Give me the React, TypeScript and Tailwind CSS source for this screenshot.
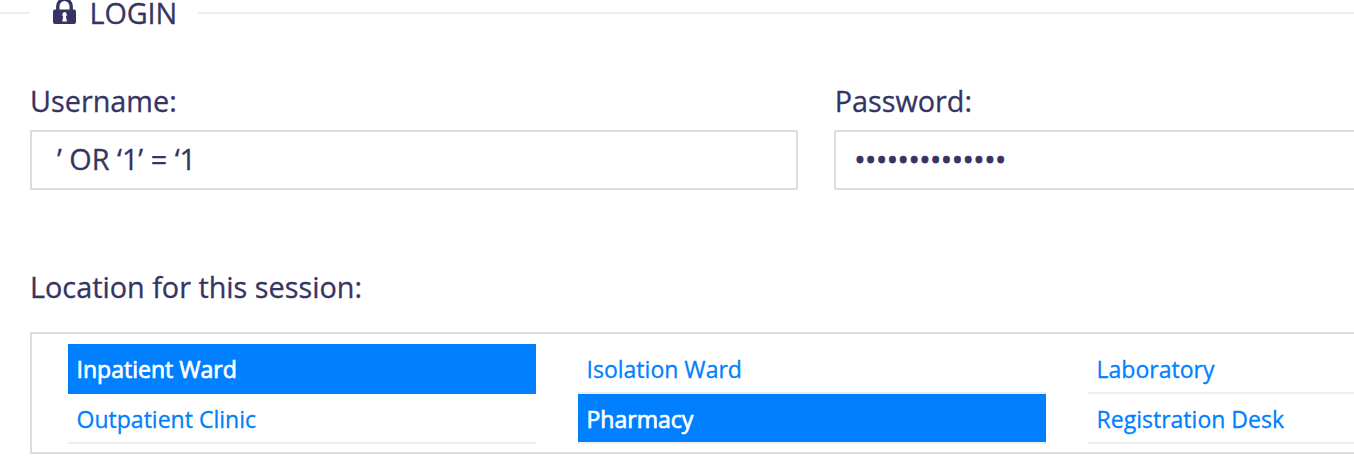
import React from 'react';

type Location = { name: string; style: string };

const selectedStrong = 'h-[50px] border-b-2 border-[#007fff] bg-[#007fff] text-white [-webkit-text-stroke:0.7px_white]';
const selected = 'h-[50px] border-b-2 border-[#eeeeee] bg-[#007fff] text-white [-webkit-text-stroke:0.7px_white]';
const plain = 'h-[50px] border-b-2 border-[#eeeeee] text-[#007fff] [-webkit-text-stroke:0.3px_#007fff]';

const columns: Location[][] = [
  [{ name: 'Inpatient Ward', style: selectedStrong }, { name: 'Outpatient Clinic', style: plain }],
  [{ name: 'Isolation Ward', style: plain }, { name: 'Pharmacy', style: selected }],
  [{ name: 'Laboratory', style: plain }, { name: 'Registration Desk', style: plain }],
];

function LockIcon() {
  return (
    <svg className="ml-[22px] h-[26px] w-[26px] shrink-0" viewBox="0 0 26 26">
      <path d="M5.800 11V6.300a6.700 7 0 0 1 13.400 0V11" fill="none" stroke="#363463" strokeWidth="3.400" />
      <path
        fillRule="evenodd"
        fill="#363463"
        d="M3 9.500H22Q24 9.500 24 11.500V22Q24 24 22 24H3Q1 24 1 22V11.500Q1 9.500 3 9.500ZM12.500 12A2.700 2.700 0 0 0 11.200 16.700L10.200 21.500H15L13.900 16.700A2.700 2.700 0 0 0 12.500 12Z"
      />
    </svg>
  );
}

export default function App() {
  return (
    <div className="h-[466px] w-full overflow-hidden bg-white font-['Open_Sans',sans-serif] text-[28.8px] text-[#363463] [-webkit-text-stroke:0.3px_#363463]">
      <div className="flex h-[26px] w-[1600px] items-center">
        <div className="h-[2px] w-[30px] bg-[#eeeeee]" />
        <LockIcon />
        <span className="ml-[11.500px] w-[86.500px] whitespace-nowrap leading-[26px] tracking-[-0.1px]">LOGIN</span>
        <div className="ml-[22px] h-[2px] flex-1 bg-[#eeeeee]" />
      </div>
      <div className="flex w-[1602px] gap-[36px] pl-[30px] pt-[55px]">
        <label className="w-[768px]">
          <span className="block h-[49px] leading-[40px]">Username:</span>
          <span className="flex h-[60px] items-center border-2 border-[#dddddd] pb-[2px] pl-[25px]">’ OR ‘1’ = ‘1</span>
        </label>
        <label className="w-[768px]">
          <span className="block h-[49px] pl-[0.7px] leading-[40px]">Password:</span>
          <span className="flex h-[60px] items-center border-2 border-[#dddddd] pb-[2px] pl-[18.500px] [-webkit-text-stroke:0.9px_#363463]">••••••••••••••</span>
        </label>
      </div>
      <div className="w-[1602px] pl-[30px] pt-[77px]">
        <div className="h-[65px] leading-[40px]">Location for this session:</div>
        <div className="flex h-[122px] gap-[42px] border-2 border-[#dddddd] pl-[36px] pt-[10px] text-[23.04px] leading-[50px]">
          {columns.map((column, i) => (
            <ul key={i} className="w-[468px] shrink-0">
              {column.map((location) => (
                <li key={location.name} className={location.style}>
                  <span className="ml-[8.500px]">{location.name}</span>
                </li>
              ))}
            </ul>
          ))}
        </div>
      </div>
    </div>
  );
}
